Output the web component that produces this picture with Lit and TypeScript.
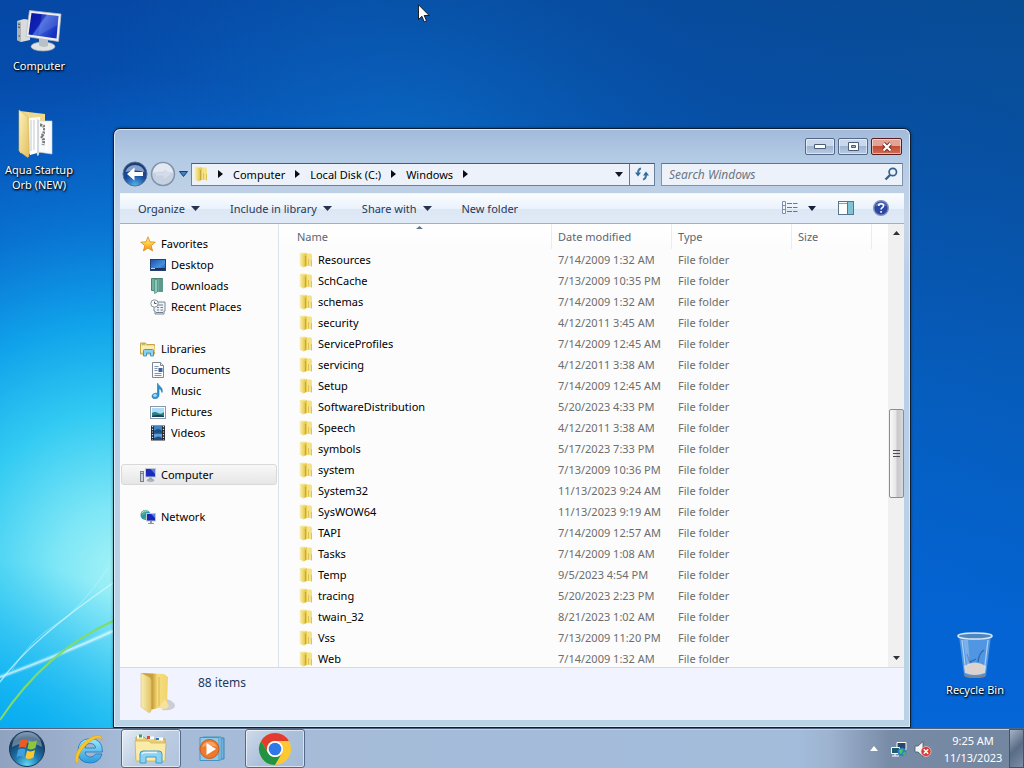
import { LitElement, html, svg, css } from "lit";
import { customElement } from "lit/decorators.js";

const FILES: [string, string][] = [
  ["Resources", "7/14/2009 1:32 AM"],
  ["SchCache", "7/13/2009 10:35 PM"],
  ["schemas", "7/14/2009 1:32 AM"],
  ["security", "4/12/2011 3:45 AM"],
  ["ServiceProfiles", "7/14/2009 12:45 AM"],
  ["servicing", "4/12/2011 3:38 AM"],
  ["Setup", "7/14/2009 12:45 AM"],
  ["SoftwareDistribution", "5/20/2023 4:33 PM"],
  ["Speech", "4/12/2011 3:38 AM"],
  ["symbols", "5/17/2023 7:33 PM"],
  ["system", "7/13/2009 10:36 PM"],
  ["System32", "11/13/2023 9:24 AM"],
  ["SysWOW64", "11/13/2023 9:19 AM"],
  ["TAPI", "7/14/2009 12:57 AM"],
  ["Tasks", "7/14/2009 1:08 AM"],
  ["Temp", "9/5/2023 4:54 PM"],
  ["tracing", "5/20/2023 2:23 PM"],
  ["twain_32", "8/21/2023 1:02 AM"],
  ["Vss", "7/13/2009 11:20 PM"],
  ["Web", "7/14/2009 1:32 AM"],
];

const icon = (w: number, h: number, body: unknown) =>
  html`<svg width=${w} height=${h} viewBox="0 0 ${w} ${h}" aria-hidden="true">${body}</svg>`;

const down = () => icon(9, 5, svg`<path d="M0 0h9L4.500 5z" fill="#26354d"/>`);
const crumbArrow = () => icon(5, 8, svg`<path d="M0 0v8l5-4z" fill="#0b0b10"/>`);

const folder = () => icon(14, 16, svg`
  <defs><linearGradient id="fs" x1="0" x2="1"><stop offset="0" stop-color="#faf3ba"/><stop offset="1" stop-color="#ecd268"/></linearGradient></defs>
  <path d="M1 1 6 .5l1.500 1v12l-6-.5z" fill="#f3e693"/>
  <path d="M.5 1 4.500 2.500v13L.5 13.500z" fill="url(#fs)"/>
  <path d="M4.500 2.500 8 1v13l-3.500 1.500z" fill="#e6cb55"/>
  <path d="M6.500 4v10" stroke="#c9a63a" stroke-width="1"/>
  <path d="M8 1.500 12 1.500 13 3v11H8z" fill="#f3e287"/>
  <path d="M9.500 7v6.500M12.500 8v6.500" stroke="#dfc25b" stroke-width="1"/>`);

const star = () => icon(16, 16, svg`
  <defs><linearGradient id="st" x2="0" y2="1"><stop offset="0" stop-color="#fff3a0"/><stop offset=".5" stop-color="#ffc93a"/><stop offset="1" stop-color="#f58a1c"/></linearGradient></defs>
  <path d="M8 .8l2 5 5.300.4-4.100 3.400 1.400 5.300L8 12l-4.600 2.900 1.400-5.300L.7 6.200 6 5.800z" fill="url(#st)" stroke="#d98a1c" stroke-width=".8"/>`);
const deskIcon = () => icon(16, 16, svg`
  <defs><linearGradient id="dk" x2="1" y2="1"><stop offset="0" stop-color="#1d4fa8"/><stop offset=".6" stop-color="#4590df"/><stop offset="1" stop-color="#1a57b5"/></linearGradient></defs>
  <rect x=".5" y="2.500" width="15" height="11" fill="url(#dk)" stroke="#273f70"/><rect x="1" y="11" width="14" height="2" fill="#1b3260"/><path d="M1 11.500h4" stroke="#a8d2f5"/>`);
const dlIcon = () => icon(16, 16, svg`
  <path d="M1.500.5h11v13l-11-1z" fill="#6fb0a0" stroke="#4a8276"/><path d="M4.500 1.500v14l3-1.500V1.500z" fill="#8fc9b8" stroke="#4f8a80" stroke-width=".7"/><path d="M9 1h4v13H9z" fill="#5e998f"/>`);
const recentIcon = () => icon(16, 16, svg`
  <path d="M4 3h11v9h-1v3H5v-3H4z" fill="#eef1f5" stroke="#7d8894"/><path d="M7 6h6M7 8.500h2M10.500 8.500H13M7 11h2M10.500 11H13M6 13.500h7" stroke="#73808f"/>
  <circle cx="4.500" cy="4.500" r="3.700" fill="#f9fbfd" stroke="#8b949f"/><path d="M4.500 2.500v2H6.500" stroke="#4f5a68" fill="none"/>`);
const libIcon = () => icon(16, 16, svg`
  <path d="M.5 2h5l1 1.500h8V13H.5z" fill="#f4dd82" stroke="#caa548"/><path d="M1 5h13.500v6H1z" fill="#f9edb4"/><path d="M2 3h3" stroke="#6fae4b"/>
  <path d="M3.500 15V9.500q0-1 1-1h8q1 0 1 1V15h-3v-3h-4v3z" fill="#8fd0ec" stroke="#3c93bf" stroke-width=".9"/>`);
const docIcon = () => icon(16, 16, svg`
  <path d="M2.500.5h8l3 3v12h-11z" fill="#fbfcfe" stroke="#7c8896"/><path d="M10.500.5v3h3" fill="#dde4ec" stroke="#7c8896"/>
  <path d="M4.500 4.500h4M4.500 6.500h3M4.500 8.500h3M4.500 11.500h7M4.500 13.500h7" stroke="#8293b0"/><path d="M8.500 6h4v4h-4z" fill="#3f629b"/>`);
const musicIcon = () => icon(16, 16, svg`
  <path d="M8 .5c.5 3 5.500 3.500 4 9-.5-2.500-2-3.500-3-4v6.500c0 4.500-7 5-7 1.200 0-2.700 3.500-3.500 5.500-2.700V.5z" fill="#2e94cf" stroke="#1c6da5" stroke-width=".6"/><ellipse cx="5" cy="12.500" rx="1.900" ry="1.400" fill="#9fdaf5"/>`);
const picIcon = () => icon(16, 16, svg`
  <rect x=".5" y="2.500" width="15" height="12" fill="#fff" stroke="#8a98a8"/><rect x="2" y="4" width="12" height="9" fill="#a9dcf5"/><path d="M2 9q3-2 6 0t6-1v5H2z" fill="#2d7f84"/><path d="M2 12q6-2 12 0v1H2z" fill="#153f5c"/>`);
const videoIcon = () => icon(16, 16, svg`
  <rect x="1" y=".5" width="14" height="15" fill="#22272f"/><rect x="4" y="1" width="8" height="6.500" fill="#3f86c8"/><rect x="4" y="8.500" width="8" height="6.500" fill="#5ba2dc"/><path d="M4 6q4-4 8 0v1.500H4zM4 13q5-3 8 0v2H4z" fill="#1f4e83"/>
  <path d="M2.500 1v14M13.500 1v14" stroke="#dbe4ea" stroke-width="1.200" stroke-dasharray="1.200 1.500"/>`);
const pcSmall = () => icon(16, 16, svg`
  <rect x=".5" y="4.500" width="3" height="10" fill="#c9ced4" stroke="#79818c"/><path d="M1.500 6.500h1" stroke="#333"/>
  <rect x="5.500" y="1.500" width="10" height="8.500" fill="#1a2bbd" stroke="#c3c8d2"/><path d="M10.500 2H15v5z" fill="#5e7be8"/><path d="M9 10.500h3v2H9z" fill="#a6aeb8"/><ellipse cx="10.500" cy="13.200" rx="3.500" ry="1.200" fill="#b4bcc6" stroke="#7e8793" stroke-width=".5"/>`);
const netSmall = () => icon(16, 16, svg`
  <circle cx="5.500" cy="6" r="5" fill="#2a93bb"/><path d="M2 3q3-3 5-2L5 5 2 7zM3 9l3-1 1 3z" fill="#4fb36a"/><path d="M1.500 4Q4 1 8 2" stroke="#b2e5ee" fill="none"/>
  <rect x="6.500" y="4.500" width="9" height="7.500" fill="#1626b5" stroke="#bfc6d3"/><path d="M11 5h4v4z" fill="#5e7be8"/><path d="M10 12h2v2h-2z" fill="#9099a5"/><path d="M8 14.500h6" stroke="#8a939f"/>`);

const bigPc = () => icon(48, 42, svg`
  <defs><linearGradient id="scr" x1="0" y1="0" x2="1" y2=".6"><stop offset="0" stop-color="#0a16a0"/><stop offset=".45" stop-color="#1022b4"/><stop offset=".5" stop-color="#4468de"/><stop offset="1" stop-color="#1430bd"/></linearGradient></defs>
  <path d="M2 11 9 9l6 1v20l-9 2-4-2z" fill="#d9dcdc"/><path d="M2 11l4 1v20l-4-2z" fill="#aeb2b4"/><path d="M3 14l2 .4M3 17l2 .4" stroke="#3b4046"/><circle cx="4.200" cy="26" r=".8" fill="#4a4f55"/>
  <ellipse cx="28" cy="36.500" rx="12" ry="4.500" fill="#dfe3e6" stroke="#9da5ac" stroke-width=".7"/><path d="M24 28l9 1v7q-5 2-9-.5z" fill="#b9c0c6"/>
  <path d="M14.500.5 46 4 43.500 31.500 11 26.500z" fill="#eceeee" stroke="#b7bbbf" stroke-width=".7"/><path d="M16.500 3 43.500 6 41.500 28.500 13.500 24.500z" fill="url(#scr)"/><path d="M27 4.200l16.500 1.800-.8 9L23 25.800z" fill="#9db4f5" opacity=".2"/>`);
const openFolder = () => icon(36, 50, svg`
  <defs><linearGradient id="of" x2="1" y2="1"><stop offset="0" stop-color="#fdf2bd"/><stop offset="1" stop-color="#e2bf5c"/></linearGradient></defs>
  <path d="M2 2 27 5v8L12 45 2 44z" fill="#efd98a"/><path d="M11 9 22 8l1 35-11 3z" fill="#fff"/><path d="M13 11v31M16 11v30" stroke="#d8dbe0" stroke-width="1.500"/>
  <path d="M20 12 34 12v33l-14-2z" fill="#f8f9fa" stroke="#cfd4d9" stroke-width=".6"/><path d="M22 16q5 0 4.500 5t-3.500 6q4 3 2 9" fill="none" stroke="#747d7b" stroke-width="3" stroke-dasharray="2 1"/><path d="M28.500 14v28" stroke="#fff" stroke-width="3"/><path d="M19 10l2 1v35l-2 1z" fill="#d6d9dc"/>
  <path d="M1 1 10 8l1 39q-1 2-2 1L1 42z" fill="url(#of)" stroke="#d6b65c" stroke-width=".6"/>`);
const bin = () => icon(38, 46, svg`
  <path d="M3 4 35 4 30 43q-11 5-22 0z" fill="#8fc0ee" opacity=".55"/><path d="M8 34q11-7 22 0l-1 7q-10 4-20 0z" fill="#dcd3ce"/><path d="M8 42q11 5 22 0l-.5 2.500q-10.500 4-21 0z" fill="#7b858c"/>
  <path d="M6 8l4 33M32 8l-4 33" stroke="#c7e1f7" stroke-width="1.200" opacity=".8"/><path d="M28 18q-5 3-6 12M11 22l3 9M14 30l6-3" stroke="#2d69ae" stroke-width="1.300" fill="none"/>
  <ellipse cx="19" cy="4" rx="17" ry="3" fill="#4c87c4" stroke="#dce8f0" stroke-width="1.500"/><path d="M7 8h5l2 25h-3z" fill="#fff" opacity=".25"/>`);
const detailFolder = () => icon(36, 42, svg`
  <defs><linearGradient id="df" x1="0" x2="1"><stop offset="0" stop-color="#fbeeb2"/><stop offset="1" stop-color="#e3c466"/></linearGradient><linearGradient id="dg" x1="0" x2="1"><stop offset="0" stop-color="#c9a03a"/><stop offset=".4" stop-color="#c9a03a"/><stop offset=".6" stop-color="#f6dd82"/><stop offset="1" stop-color="#f1d46b"/></linearGradient></defs>
  <path d="M22 38q12 1 13-4 0-4-8-7z" fill="#bcbec4" opacity=".7"/><path d="M2 1 24 2l4 3-1 29-17 4z" fill="url(#dg)"/><path d="M19 5v31" stroke="#e9ca63" stroke-width="2"/><path d="M25 27l4 7-3 3-8-1z" fill="#f5e29b"/>
  <path d="M1 1 9 5q2 1 2 4v30q-1 3-3 1L1 35z" fill="url(#df)" stroke="#dcc072" stroke-width=".6"/>`);

const orb = () => icon(38, 38, svg`
  <defs><radialGradient id="ob" cx=".5" cy=".95" r=".9"><stop offset="0" stop-color="#5fd8f5"/><stop offset=".4" stop-color="#1f76ad"/><stop offset=".85" stop-color="#12395f"/><stop offset="1" stop-color="#3b668f"/></radialGradient></defs>
  <circle cx="19" cy="19" r="17.500" fill="url(#ob)" stroke="#1d3656" stroke-width="1"/><path d="M4 17a15 15 0 0130 0q-15-8-30 0z" fill="#fff" opacity=".32"/>
  <path d="M12 11q4-2.500 7.500-.5L18 18q-4-2-7.500.5z" fill="#ea5a24"/><path d="M21 11q4 1.500 8-.5l-1.500 7.500q-4 2.500-8 .5z" fill="#8dc63c"/><path d="M10 20q4-2.500 7.500-.5L16 27q-4-2-7.500.5z" fill="#3fa0e0"/><path d="M19 20.500q4 2 8-.5L25.500 27.500q-4 2.500-8 .5z" fill="#fdc82c"/>`);
const ie = () => icon(34, 34, svg`
  <defs><linearGradient id="ie" x2="0" y2="1"><stop offset="0" stop-color="#9ce8fd"/><stop offset="1" stop-color="#2b9add"/></linearGradient></defs>
  <path d="M30.500 20H13q.5 5 5.500 5 3.500 0 5-3h6.500q-2.500 9-12 9Q6 31 6 19T18 6.500q12.500 0 12.500 13.500zM13 16h10.500q-.5-4.500-5.200-4.500T13 16z" fill="url(#ie)" stroke="#1d76b7" stroke-width=".8" fill-rule="evenodd"/>
  <path d="M5 31C-1 26 10 6 25 3.500q6-.5 5 5 0-3-4.500-2.500C14 9 4 24 6.500 30z" fill="#f8c62b" stroke="#dd9b18" stroke-width=".5"/>`);
const explorer = () => icon(34, 30, svg`
  <path d="M2 6V3h8l2 2h19v20H2z" fill="#e9cf73" stroke="#b99741" stroke-width=".8"/><path d="M3 3h6M14 4h6M23 5h6" stroke="#fff" stroke-width="3"/><path d="M5 2h3" stroke="#39a348" stroke-width="3"/><path d="M13 3.500h3" stroke="#d44c35" stroke-width="3"/><path d="M22 5h3" stroke="#3178c9" stroke-width="2"/>
  <path d="M1 7h14l2 2h15l-1 18H2z" fill="#faeca8" stroke="#cfb259" stroke-width=".8"/>
  <path d="M6 29V20q0-3 3-3h16q3 0 3 3v9h-6v-6H12v6z" fill="#8bd1f2" stroke="#3d9bcd"/><path d="M8 20q1-1.500 3-1.500h12" stroke="#e2f6ff" fill="none" stroke-width="1.500"/>`);
const media = () => icon(28, 26, svg`
  <path d="M8 2h17v21H8z" fill="#6eb3df" stroke="#3f83b5"/><path d="M4 1h18v23H4z" fill="#a5d9f2" stroke="#4b92c1"/><path d="M1 1.500h19v23H1z" fill="#8cc9ea" stroke="#4a92c2"/>
  <circle cx="10.500" cy="13" r="9.500" fill="#ee7a2d" stroke="#cb5b1c"/><path d="M3 11a8 8 0 0115 0q-7-3-15 0z" fill="#fbb27a" opacity=".7"/><path d="M7.500 7v12l9.500-6z" fill="#fff"/>`);
const chrome = () => icon(34, 34, svg`
  <circle cx="17" cy="17" r="16" fill="#fcc934"/><path d="M3.140 9A16 16 0 0130.860 9H17a8 8 0 00-6.930 12z" fill="#e33b2e"/><path d="M3.140 9A16 16 0 0017 33l6.930-12a8 8 0 01-13.860 0z" fill="#229342"/>
  <circle cx="17" cy="17" r="8" fill="#fff"/><circle cx="17" cy="17" r="6.300" fill="#2f78ea"/>`);

@customElement("app-root")
export class AppRoot extends LitElement {
  static styles = css`
    :host { display: block; font: 11px/15px "Noto Sans", "Open Sans", sans-serif; color: #000; }
    * { box-sizing: border-box; }
    svg { display: block; flex: none; }
    button, input { font: inherit; color: inherit; border: 0; background: none; padding: 0; margin: 0; }
    a { color: inherit; text-decoration: none; }
    .screen { display: grid; grid-template-rows: 1fr 40px; height: 100vh; overflow: hidden; position: relative; background: #0660cf; }
    .wall { position: absolute; inset: 0; width: 100%; height: 100%; }
    .desktop { position: relative; min-height: 0; display: flex; justify-content: space-between; }
    .shortcuts { display: flex; flex-direction: column; gap: 36px; padding: 10px 0; width: 78px; }
    .shortcuts.end { justify-content: flex-end; width: 98px; padding: 0 0 31px; }
    .shortcut { display: flex; flex-direction: column; align-items: center; gap: 6px; text-align: center; color: #fff; text-shadow: 0 1px 2px #000, 1px 1px 2px #000; }
    .shortcut.tight { gap: 3px; }
    .shortcut.tight svg { margin-right: 6px; }
    .shortcuts.end .shortcut { gap: 4px; }

    .window { position: absolute; inset: 128px 113px 0; display: flex; flex-direction: column; padding: 0 6px 7px; border: 1px solid #0d1e33; border-radius: 7px 7px 0 0;
      background: linear-gradient(#a3b9da, #b4cbe5 30px, #bdd0e6 60px, #c8d5e8 95px, #b9cee9 150px, #b9d3e6); box-shadow: inset 0 0 0 1px #dceaf8, 0 0 3px #00000070; }
    .caption { display: flex; justify-content: flex-end; gap: 3px; height: 33px; padding: 9px 2px 7px; }
    .caption button { width: 30px; height: 17px; display: grid; place-items: center; border: 1px solid #54698a; border-radius: 2px; background: linear-gradient(#c9d8ea 45%, #9fb5d1 50%, #b9cce3); box-shadow: inset 0 0 0 1px #ffffff80; }
    .caption .close { width: 31px; border-color: #5a1c1c; background: linear-gradient(#e0a396 45%, #c44d34 50%, #cf6d55); }
    .nav { display: flex; align-items: center; height: 24px; padding: 0 1px 0 2px; }
    .round { width: 26px; height: 26px; margin-right: 2px; }
    .recent { margin: 0 3px 0 1px; }
    .address { flex: 1; min-width: 0; height: 23px; display: flex; border: 1px solid #6c809c; border-top-color: #465b79; background: #edf2fa; }
    .crumbs { flex: 1; display: flex; align-items: center; gap: 10px; padding: 0 6px 0 2px; white-space: nowrap; }
    .crumbs .spread { flex: 1; }
    .refresh { width: 25px; display: grid; place-items: center; border-left: 1px solid #66788f; }
    .search { width: 242px; height: 23px; margin-left: 6px; padding: 0 4px 0 7px; display: flex; align-items: center; border: 1px solid #8093ad; border-top-color: #5f7391; background: #edf2fa; }
    .search input { flex: 1; min-width: 0; outline: none; font-size: 12px; }
    .search input::placeholder { color: #6d747e; font-style: italic; opacity: 1; }
    .tools { display: flex; align-items: center; gap: 30px; height: 31px; margin-top: 7px; padding: 0 15px 1px 18px; border-bottom: 1px solid #a0afc3; color: #1e395b;
      background: linear-gradient(#fbfdff, #eaf2fc 50%, #dce7f5 52%, #e0eaf7); border-top: 1px solid #eef4fb; }
    .tools button { display: flex; align-items: center; gap: 6px; white-space: nowrap; }
    .tools .spread { flex: 1; }
    .tools .view { gap: 10px; margin-right: -8px; }
    .tools .help { margin-left: -11px; }
    .body { flex: 1; min-height: 0; display: flex; background: #fcfcfc; }
    .tree { width: 159px; padding: 9px 1px; border-right: 1px solid #dbe2ee; display: flex; flex-direction: column; gap: 21px; flex: none; }
    .tree ul { list-style: none; margin: 0; padding: 0; }
    .tree a { display: flex; align-items: center; gap: 5px; height: 21px; padding-left: 18px; border: 1px solid transparent; border-radius: 3px; white-space: nowrap; }
    .tree .sub { padding-left: 28px; }
    .tree .on { border-color: #d9d9d9; background: linear-gradient(#f8f8f8, #e6e6e6); }
    .list { flex: 1; min-width: 0; overflow: hidden; }
    table { width: 100%; table-layout: fixed; border-collapse: separate; border-spacing: 0; }
    th, td { text-align: left; font-weight: 400; padding: 0 0 0 6px; white-space: nowrap; color: #6d6d6d; }
    th { position: relative; height: 25px; color: #5a6673; border-right: 1px solid #e8edf2; background: linear-gradient(#fff, #fcfcfc); }
    th:last-child { border: 0; }
    th:first-child { padding-left: 18px; }
    .sort { position: absolute; top: 1px; left: 50%; }
    td { height: 21px; }
    td:first-child { padding-left: 20px; }
    .file { display: flex; align-items: center; gap: 5px; color: #000; }
    .name { width: 273px; } .mid { width: 120px; } .size { width: 80px; }
    .scroll { width: 16px; display: flex; flex-direction: column; align-items: center; background: #f0f0f1; flex: none; }
    .scroll button { width: 16px; height: 18px; display: grid; place-items: center; }
    .before { flex: 168; } .after { flex: 152; }
    .thumb { width: 15px; height: 89px; display: grid; place-items: center; border: 1px solid #8d8d90; border-radius: 2px; background: linear-gradient(90deg, #f8f8f8, #e6e6e8 45%, #c9c9cd 55%, #d8d8da); }
    .details { display: flex; gap: 22px; height: 53px; padding: 4px 20px; border-top: 1px solid #d4dbe6; background: #f1f4fe; color: #1e395b; font-size: 12px; }
    .details span { padding-top: 3px; }

    .taskbar { position: relative; display: flex; align-items: stretch; border-top: 1px solid #4f6480; box-shadow: inset 0 1px #c3d2e5;
      background: linear-gradient(90deg, #8fa2bf, #a6bbd7 12%, #a3bcdb 78%, #9db3cf 81%, #788ba6 87%, #7386a0); }
    .taskbar button { display: grid; place-items: center; }
    .start { width: 54px; }
    .pin { width: 60px; margin-right: 2px; }
    .pin.ie { margin: 0 2px 0 5px; }
    .pin.open { border: 1px solid #54698a; border-radius: 3px; background: linear-gradient(135deg, #e6edf6, #bccde2 50%, #b0c4de); box-shadow: inset 0 0 0 1px #ffffff90; }
    .pin.chrome { background: linear-gradient(135deg, #cedbea, #acc0da 50%, #a4bad6); }
    .tray { margin-left: auto; display: flex; align-items: center; gap: 6px; color: #fff; }
    .tray .more { padding-right: 5px; }
    .clock { width: 70px; text-align: center; line-height: 17px; }
    .peek { width: 15px; align-self: stretch; margin-left: -5px; border: 1px solid #44546c; background: linear-gradient(135deg, #a6b3c4, #596c86 50%, #7d8ea5); }
    .cursor { position: absolute; left: 418px; top: 4px; }
  `;

  private link(icon: unknown, label: string, cls = "") {
    return html`<li><a href="#" class=${cls}>${icon}${label}</a></li>`;
  }

  render() {
    return html`
      <div class="screen">
        <svg class="wall" viewBox="0 0 1024 768" preserveAspectRatio="none" aria-hidden="true">
          <defs>
            <linearGradient id="base" x2="0" y2="1"><stop offset="0" stop-color="#0548a6"/><stop offset=".5" stop-color="#0560c6"/><stop offset="1" stop-color="#0466da"/></linearGradient>
            <radialGradient id="sky" gradientUnits="userSpaceOnUse" cx="120" cy="570" r="500"><stop offset="0" stop-color="#a4f2f7"/><stop offset=".13" stop-color="#7de6f6"/><stop offset=".32" stop-color="#32caf2"/><stop offset=".5" stop-color="#10a2ea"/><stop offset=".68" stop-color="#0a7bd8" stop-opacity=".85"/><stop offset="1" stop-color="#0660c8" stop-opacity="0"/></radialGradient>
            <radialGradient id="mid" gradientUnits="userSpaceOnUse" cx="400" cy="200" r="340"><stop offset="0" stop-color="#0d7cd8" stop-opacity=".75"/><stop offset="1" stop-color="#0a60c0" stop-opacity="0"/></radialGradient>
            <linearGradient id="corner" x1="1" y1="0" x2=".6" y2=".5"><stop offset="0" stop-color="#0a4f88" stop-opacity=".6"/><stop offset="1" stop-color="#0a4f98" stop-opacity="0"/></linearGradient>
            <radialGradient id="low" gradientUnits="userSpaceOnUse" cx="0" cy="760" r="200"><stop offset="0" stop-color="#04a9f2"/><stop offset="1" stop-color="#04a9f2" stop-opacity="0"/></radialGradient>
          </defs>
          <rect width="1024" height="768" fill="url(#base)"/>
          <rect width="1024" height="768" fill="url(#mid)"/>
          <rect width="1024" height="768" fill="url(#sky)"/>
          <rect width="1024" height="768" fill="url(#corner)"/>
          <rect width="1024" height="768" fill="url(#low)"/>
          <g fill="none">
            <path d="M0 677Q60 655 113 631" stroke="#fff" stroke-width="5" opacity=".2"/>
            <path d="M0 677Q60 655 113 631" stroke="#eaffff" stroke-width="2" opacity=".6"/>
            <path d="M0 682Q30 640 113 583" stroke="#d9fbff" stroke-width="1.500" opacity=".7"/>
            <path d="M12 670Q30 640 55 625T108 568" stroke="#d9fbff" opacity=".4"/>
            <path d="M0 720Q45 652 113 621" stroke="#7fdc6a" stroke-width="2"/>
          </g>
        </svg>

        <main class="desktop">
          <div class="shortcuts">
            <a class="shortcut" href="#">${bigPc()}<span>Computer</span></a>
            <a class="shortcut tight" href="#">${openFolder()}<span>Aqua Startup<br />Orb (NEW)</span></a>
          </div>
          <div class="shortcuts end">
            <a class="shortcut" href="#">${bin()}<span>Recycle Bin</span></a>
          </div>

          <section class="window" aria-label="Windows">
            <div class="caption">
              <button aria-label="Minimize">${icon(12, 5, svg`<path d="M.5.500h11v4H.5z" fill="#fff" stroke="#4c5d78"/>`)}</button>
              <button aria-label="Maximize">${icon(11, 9, svg`<path d="M.5.500h10v8H.5zM3.500 3.500h4v2h-4z" fill="#fff" stroke="#4c5d78" fill-rule="evenodd"/>`)}</button>
              <button class="close" aria-label="Close">${icon(12, 10, svg`<path d="M2.500 1.500l7 7M9.500 1.500l-7 7" stroke="#6e2a20" stroke-width="4"/><path d="M2.500 1.500l7 7M9.500 1.500l-7 7" stroke="#fff" stroke-width="2.300"/>`)}</button>
            </div>
            <div class="nav">
              <button class="round" aria-label="Back">${icon(26, 26, svg`
                <defs><radialGradient id="bk" cx=".5" cy="1" r="1"><stop offset="0" stop-color="#56b8f0"/><stop offset=".5" stop-color="#184a9c"/><stop offset=".9" stop-color="#1c3f7c"/></radialGradient></defs>
                <circle cx="13" cy="13" r="12" fill="url(#bk)" stroke="#5b6f92"/><path d="M3.500 11a10 10 0 0119 0q-9-3-19 0z" fill="#cfe0f8" opacity=".6"/><path d="M5 13l7.500-6.500v4.500H21v4h-8.500v4.500z" fill="#fff"/>`)}</button>
              <button class="round" aria-label="Forward">${icon(26, 26, svg`
                <circle cx="13" cy="13" r="11.500" fill="#c6d2e2" stroke="#8392aa" stroke-width="1.500"/><path d="M3 12a10 10 0 0120 0q-10-3-20 0z" fill="#fff" opacity=".5"/><path d="M21 13l-7-5v3.500H6v3h8V18z" fill="#d3dce8"/>`)}</button>
              <button class="recent" aria-label="Recent pages">${icon(9, 6, svg`<path d="M.5.500h8L4.500 5.500z" fill="#3c81c4" stroke="#1c3d70"/>`)}</button>
              <div class="address">
                <div class="crumbs">
                  ${folder()}${crumbArrow()}<a href="#">Computer</a>${crumbArrow()}<a href="#">Local Disk (C:)</a>${crumbArrow()}<a href="#">Windows</a>${crumbArrow()}
                  <span class="spread"></span>${icon(8, 5, svg`<path d="M0 0h8L4 5z" fill="#101828"/>`)}
                </div>
                <button class="refresh" aria-label="Refresh">${icon(14, 14, svg`<path d="M0 5.500h6L3 9.500zM8 8.500h6l-3-4z" fill="#2e6796"/><path d="M6 1.500Q3 2 3 6.500M8 12.500q3-.5 3-5" fill="none" stroke="#3b76a5" stroke-width="2"/>`)}</button>
              </div>
              <label class="search"><input type="text" placeholder="Search Windows" aria-label="Search Windows" />${icon(14, 14, svg`<circle cx="8.800" cy="5" r="3.700" fill="#e8f2fc" stroke="#33608f" stroke-width="1.700"/><path d="M6 8l-4.500 4.500" stroke="#33608f" stroke-width="2.300"/>`)}</label>
            </div>
            <div class="tools">
              <button>Organize ${down()}</button>
              <button>Include in library ${down()}</button>
              <button>Share with ${down()}</button>
              <button>New folder</button>
              <span class="spread"></span>
              <button class="view" aria-label="Change your view">${icon(16, 14, svg`<path d="M.5.500h3v12h-3zM.5 4.500h3M.5 8.500h3" fill="#f4f8fc" stroke="#8191a5"/><path d="M5 2.500h5M11 2.500h4.500M5 6.500h5M11 6.500h4.500M5 10.500h5M11 10.500h4.500" stroke="#66788f"/>`)}${icon(8, 5, svg`<path d="M0 0h8L4 5z" fill="#15233a"/>`)}</button>
              <button aria-label="Preview pane">${icon(16, 14, svg`<rect x=".5" y=".5" width="15" height="13" fill="#fff" stroke="#567391"/><path d="M1 2.500h9" stroke="#86a1bb"/><rect x="10" y="1" width="5" height="12" fill="#7fc3d6"/><path d="M9.500 1v12" stroke="#567391"/>`)}</button>
              <button class="help" aria-label="Help">${icon(16, 16, svg`<circle cx="8" cy="8" r="7.300" fill="#2c46a8" stroke="#8593b5" stroke-width="1.400"/><path d="M2.500 6a6 6 0 0111 0q-6-2-11 0z" fill="#a9bdf0" opacity=".6"/><path d="M5.700 6q0-2.300 2.400-2.300T10.500 6Q10.500 7 9 7.800 8.100 8.400 8.100 9.500M8.100 11v1.700" fill="none" stroke="#fff" stroke-width="1.600"/>`)}</button>
            </div>
            <div class="body">
              <nav class="tree">
                <ul>${this.link(star(), "Favorites")}${this.link(deskIcon(), "Desktop", "sub")}${this.link(dlIcon(), "Downloads", "sub")}${this.link(recentIcon(), "Recent Places", "sub")}</ul>
                <ul>${this.link(libIcon(), "Libraries")}${this.link(docIcon(), "Documents", "sub")}${this.link(musicIcon(), "Music", "sub")}${this.link(picIcon(), "Pictures", "sub")}${this.link(videoIcon(), "Videos", "sub")}</ul>
                <ul>${this.link(pcSmall(), "Computer", "on")}</ul>
                <ul>${this.link(netSmall(), "Network")}</ul>
              </nav>
              <div class="list">
                <table>
                  <colgroup><col class="name" /><col class="mid" /><col class="mid" /><col class="size" /><col /></colgroup>
                  <thead><tr><th>Name<span class="sort">${icon(8, 4, svg`<path d="M1 4h7L4.500 1z" fill="#5d7893"/>`)}</span></th><th>Date modified</th><th>Type</th><th>Size</th><th></th></tr></thead>
                  <tbody>${FILES.map(([name, date]) => html`<tr><td><span class="file">${folder()}${name}</span></td><td>${date}</td><td>File folder</td><td></td><td></td></tr>`)}</tbody>
                </table>
              </div>
              <div class="scroll">
                <button aria-label="Scroll up">${icon(7, 4, svg`<path d="M0 4h7L3.500 0z" fill="#303238"/>`)}</button>
                <span class="before"></span>
                <span class="thumb">${icon(7, 9, svg`<path d="M0 1.500h7M0 4.500h7M0 7.500h7" stroke="#4d4d50"/>`)}</span>
                <span class="after"></span>
                <button aria-label="Scroll down">${icon(7, 4, svg`<path d="M0 0h7L3.500 4z" fill="#303238"/>`)}</button>
              </div>
            </div>
            <div class="details">${detailFolder()}<span>88 items</span></div>
          </section>
        </main>

        <footer class="taskbar">
          <button class="start" aria-label="Start">${orb()}</button>
          <button class="pin ie" aria-label="Internet Explorer">${ie()}</button>
          <button class="pin open" aria-label="Windows Explorer">${explorer()}</button>
          <button class="pin" aria-label="Media Player">${media()}</button>
          <button class="pin open chrome" aria-label="Chrome">${chrome()}</button>
          <div class="tray">
            <button class="more" aria-label="Show hidden icons">${icon(10, 5, svg`<path d="M1 5h8L5 0z" fill="#fff"/>`)}</button>
            <button aria-label="Network">${icon(18, 16, svg`<path d="M7 1.500h9v7H7z" fill="#264869" stroke="#fff"/><path d="M1.500 6.500h8v6h-8z" fill="#1d5a74" stroke="#fff"/><path d="M5 13v2M2 15h7" stroke="#fff"/><circle cx="12" cy="11" r="4.300" fill="#2a84c4"/><path d="M9 9l4-1-1 4-2 1zM13 12l3-1-2 4z" fill="#58c34d"/>`)}</button>
            <button aria-label="Volume muted">${icon(18, 16, svg`<path d="M1 5h3l5-4.500v15L4 11H1z" fill="#f5f5f5" stroke="#46566c" stroke-width=".8"/><circle cx="12" cy="10.500" r="5" fill="#d93b33" stroke="#f3c9c4" stroke-width=".7"/><path d="M9.800 8.300l4.400 4.400M14.200 8.300l-4.400 4.400" stroke="#fff" stroke-width="1.500"/>`)}</button>
            <div class="clock">9:25 AM<br />11/13/2023</div>
            <button class="peek" aria-label="Show desktop"></button>
          </div>
        </footer>
        <svg class="cursor" width="12" height="19" viewBox="0 0 12 19" aria-hidden="true"><path d="M.5.800v14.700l3.400-3.200 2.300 5.500 2.300-1-2.300-5.300h5z" fill="#fff" stroke="#111" stroke-width=".9"/></svg>
      </div>`;
  }
}
